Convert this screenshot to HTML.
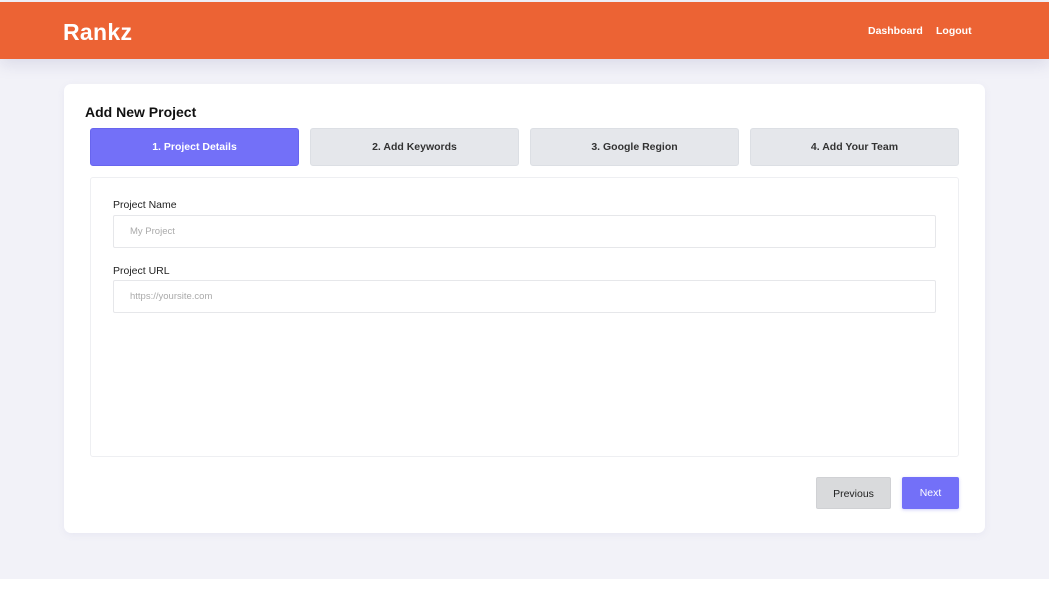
<!DOCTYPE html>
<html><head><style>
*{box-sizing:border-box;margin:0;padding:0}
body{width:1049px;height:600px;background:#fff;font-family:"Liberation Sans",sans-serif;position:relative;overflow:hidden}
.bg{position:absolute;left:0;top:0;width:1049px;height:579px;background:#f2f2f8}
.hdr{position:absolute;left:0;top:2px;width:1049px;height:57px;background:#ec6334;box-shadow:0 6px 14px rgba(120,120,170,.18)}
.logo{position:absolute;left:63px;top:19px;color:#fff;font-weight:bold;font-size:23px;letter-spacing:.3px}
.nav{position:absolute;top:25px;color:#fff;font-size:10.5px;font-weight:bold}
.card{position:absolute;left:64px;top:84px;width:921px;height:449px;background:#fff;border-radius:7px;box-shadow:0 2px 8px rgba(120,120,180,.08)}
h1{position:absolute;left:85px;top:104px;font-size:14px;font-weight:bold;color:#111}
.tab{position:absolute;top:128px;width:209px;height:38px;background:#e5e7eb;border:1px solid #dcdfe4;border-radius:3px;font-size:10.5px;font-weight:bold;color:#333;text-align:center;line-height:37px}
.tab.a{background:#7370f8;border-color:#6865ee;color:#fff}
.inner{position:absolute;left:90px;top:177px;width:869px;height:280px;border:1px solid #eeeff2;border-radius:3px}
.lbl{position:absolute;left:113px;font-size:10.5px;color:#222}
.inp{position:absolute;left:113px;width:823px;height:33px;border:1px solid #e6e7ea;border-radius:2px;font-size:9.5px;color:#aaa;padding-left:16px;line-height:31px}
.btn{position:absolute;top:477px;height:32px;border-radius:2px;font-size:10.5px;text-align:center;line-height:32px}
</style></head><body>
<div class="bg"></div>
<div class="hdr"></div>
<div class="logo">Rankz</div>
<div class="nav" style="left:868px">Dashboard</div>
<div class="nav" style="left:936px">Logout</div>
<div class="card"></div>
<h1>Add New Project</h1>
<div class="tab a" style="left:90px">1. Project Details</div>
<div class="tab" style="left:310px">2. Add Keywords</div>
<div class="tab" style="left:530px">3. Google Region</div>
<div class="tab" style="left:750px">4. Add Your Team</div>
<div class="inner"></div>
<div class="lbl" style="top:199px">Project Name</div>
<div class="inp" style="top:215px">My Project</div>
<div class="lbl" style="top:265px">Project URL</div>
<div class="inp" style="top:280px">https://yoursite.com</div>
<div class="btn" style="left:816px;width:75px;background:#d9dadc;color:#222;border:1px solid #d0d1d4">Previous</div>
<div class="btn" style="left:902px;width:57px;background:#7370f8;color:#fff;box-shadow:0 1px 3px rgba(100,100,240,.3)">Next</div>
</body></html>
